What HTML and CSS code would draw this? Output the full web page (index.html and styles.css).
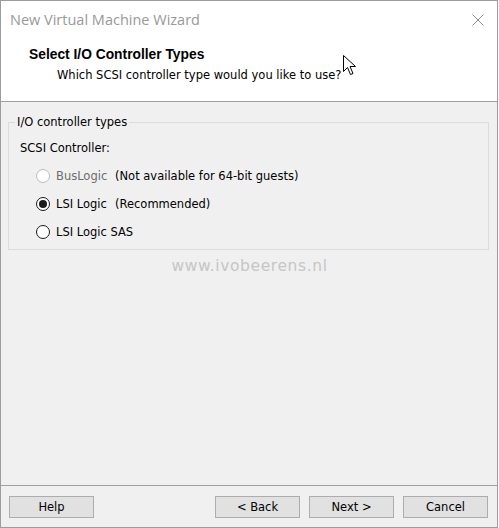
FILE: index.html
```html
<!DOCTYPE html>
<html>
<head>
<meta charset="utf-8">
<link rel="stylesheet" href="styles.css">
</head>
<body>
<div class="window">
  <div class="titlebar">
    <span class="title">New Virtual Machine Wizard</span>
    <svg class="close" width="12" height="12" viewBox="0 0 12 12"><path d="M0.5 0.5 L11.5 11.5 M11.5 0.5 L0.5 11.5" stroke="#8a8a8a" stroke-width="1" fill="none"/></svg>
  </div>
  <div class="header">
    <div class="h-title">Select I/O Controller Types</div>
    <div class="h-sub">Which SCSI controller type would you like to use?</div>
    <svg class="cursor" width="14" height="22" viewBox="0 0 14 22"><path d="M0.5 0.5 L0.5 16.5 L4.5 12.5 L7.5 19.5 L10 18.5 L7 11.5 L12.5 11.5 Z" fill="#fff" stroke="#000" stroke-width="1" stroke-linejoin="miter"/></svg>
  </div>
  <div class="body">
    <fieldset class="group">
      <legend>I/O controller types</legend>
      <div class="label">SCSI Controller:</div>
      <div class="opt disabled"><span class="radio"></span><span class="name">BusLogic</span><span class="note">(Not available for 64-bit guests)</span></div>
      <div class="opt"><span class="radio checked"></span><span class="name">LSI Logic</span><span class="note">(Recommended)</span></div>
      <div class="opt"><span class="radio"></span><span class="name">LSI Logic SAS</span></div>
    </fieldset>
    <div class="watermark">www.ivobeerens.nl</div>
  </div>
  <div class="footer">
    <button class="btn">Help</button>
    <span class="spacer"></span>
    <button class="btn">&lt; Back</button>
    <button class="btn">Next &gt;</button>
    <button class="btn">Cancel</button>
  </div>
</div>
</body>
</html>
```
FILE: styles.css
```css
html, body {
  margin: 0;
  padding: 0;
  background: #ffffff;
}
.window {
  width: 498px;
  height: 528px;
  box-sizing: border-box;
  border: 1px solid #9c9c9c;
  display: flex;
  flex-direction: column;
  font-family: "DejaVu Sans", Verdana, sans-serif;
  font-size: 11.5px;
  line-height: 14px;
  color: #000;
  background: #f0f0f0;
}
.titlebar {
  height: 37px;
  flex: none;
  background: #fff;
  display: flex;
  align-items: center;
  padding-left: 9px;
  padding-right: 13px;
}
.title {
  font-family: "Open Sans", "Noto Sans", sans-serif;
  font-size: 14.5px;
  color: #999999;
  flex: 1;
}
.close {
  display: block;
  margin-top: 1px;
}
.header {
  flex: none;
  background: #fff;
  border-bottom: 1px solid #a0a0a0;
  padding-left: 28px;
  padding-top: 9px;
  box-sizing: border-box;
  height: 64px;
  position: relative;
}
.h-title {
  font-family: "Liberation Sans", Arial, sans-serif;
  font-weight: bold;
  font-size: 13.8px;
  line-height: 16px;
}
.h-sub {
  margin-top: 5px;
  padding-left: 28px;
  color: #000;
}
.cursor {
  position: absolute;
  left: 342px;
  top: 17px;
}
.body {
  flex: 1;
  padding: 13px 8px 0 7px;
}
.group {
  margin: 0;
  padding: 12px 10px 3px 11px;
  border: 1px solid #dcdcdc;
  width: 481px;
  box-sizing: border-box;
}
.group legend {
  padding: 0 2px;
  margin-left: -5px;
  line-height: 14px;
}
.opt {
  display: flex;
  align-items: center;
  height: 28px;
  margin-left: 16px;
  white-space: nowrap;
}
.label + .opt {
  margin-top: 7px;
}
.radio {
  flex: none;
  width: 14px;
  height: 14px;
  box-sizing: border-box;
  border: 1px solid #1a1a1a;
  border-radius: 50%;
  background: #fff;
  margin-right: 6px;
  position: relative;
}
.radio.checked::after {
  content: "";
  position: absolute;
  left: 2px;
  top: 2px;
  width: 8px;
  height: 8px;
  border-radius: 50%;
  background: #1a1a1a;
}
.disabled .radio {
  border-color: #bcbcbc;
}
.disabled .name {
  color: #6d6d6d;
}
.name {
  min-width: 59px;
}
.watermark {
  text-align: center;
  font-family: "DejaVu Sans", sans-serif;
  font-size: 15.5px;
  line-height: 18px;
  letter-spacing: 0.6px;
  color: #c6c6c6;
  margin-top: 7px;
  padding-left: 2px;
}
.footer {
  flex: none;
  height: 42px;
  box-sizing: border-box;
  border-top: 1px solid #a0a0a0;
  display: flex;
  align-items: flex-start;
  padding: 10px 9px 0 8px;
  gap: 9px;
}
.spacer {
  flex: 1;
}
.btn {
  width: 85px;
  height: 22px;
  margin: 0;
  padding: 0;
  background: #e1e1e1;
  border: 1px solid #adadad;
  font-family: "DejaVu Sans", Verdana, sans-serif;
  font-size: 11.5px;
  color: #000;
  border-radius: 0;
}
```
